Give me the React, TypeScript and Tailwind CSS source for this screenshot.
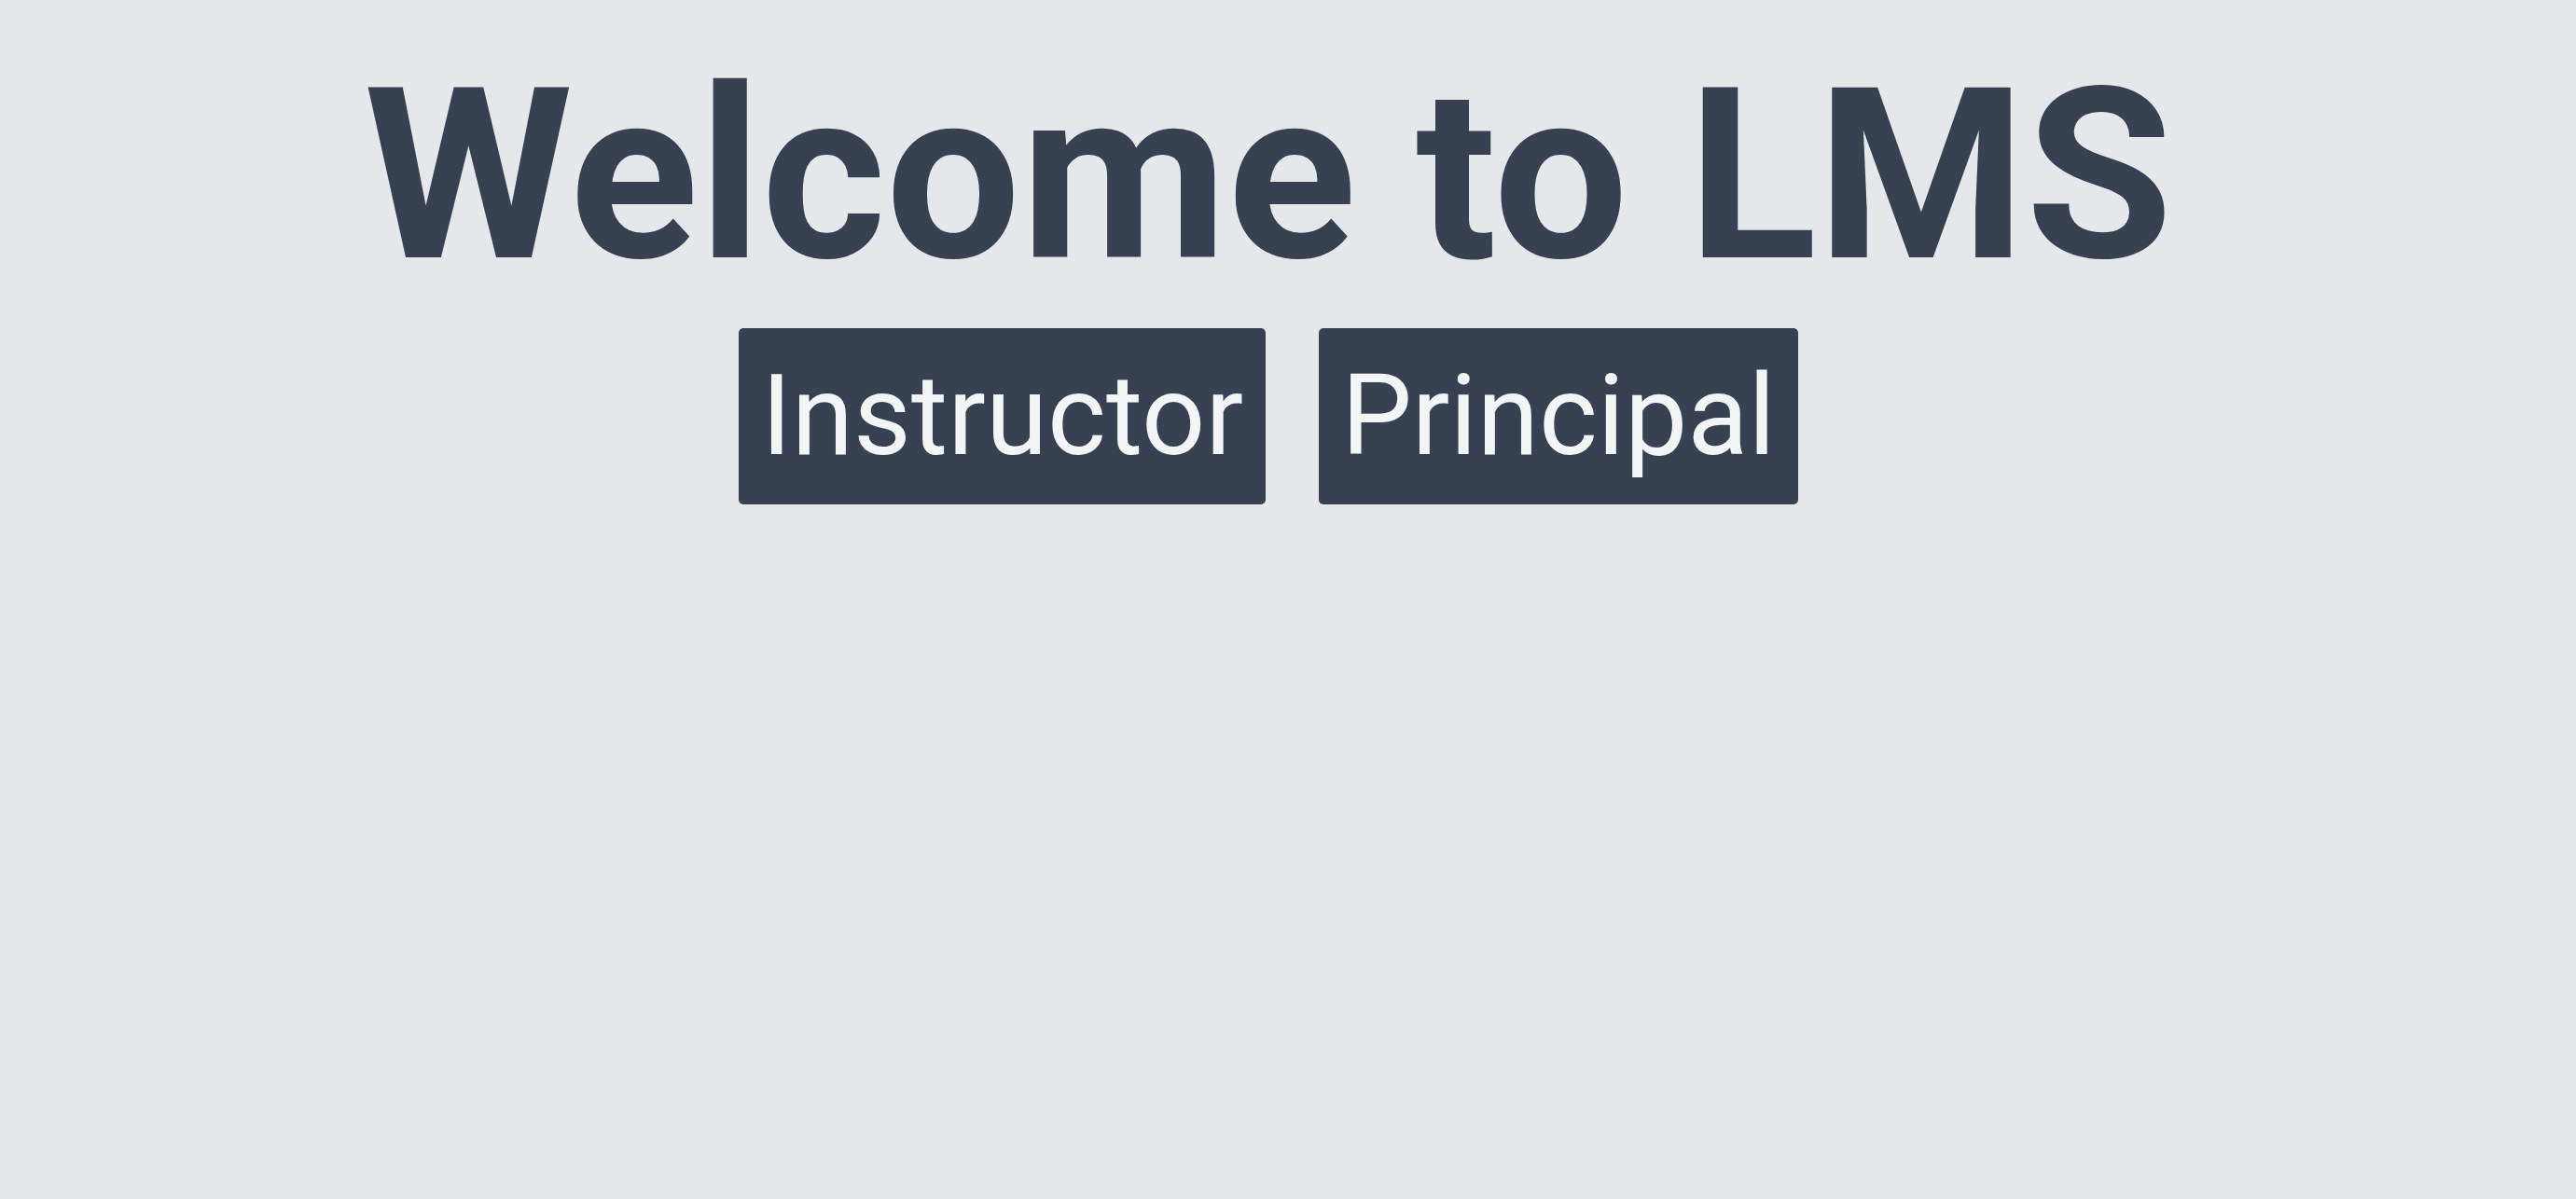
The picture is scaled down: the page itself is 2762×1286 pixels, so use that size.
export default function App() {
  return (
    <div className="min-h-screen bg-[#e5e7eb] font-['Roboto',sans-serif]">
      <div className="flex flex-col items-center gap-[13px] pt-[39px] pr-[42px]">
        <h1 className="text-[256px] font-bold leading-[300px] text-[#374151]">
          Welcome to LMS
        </h1>
        <div className="flex gap-[57px]">
          <button className="rounded-[5px] bg-[#374151] px-6 py-6 text-[120px] leading-[141px] text-[#f3f4f6]">
            Instructor
          </button>
          <button className="rounded-[5px] bg-[#374151] px-6 py-6 text-[120px] leading-[141px] text-[#f3f4f6]">
            Principal
          </button>
        </div>
      </div>
    </div>
  );
}
